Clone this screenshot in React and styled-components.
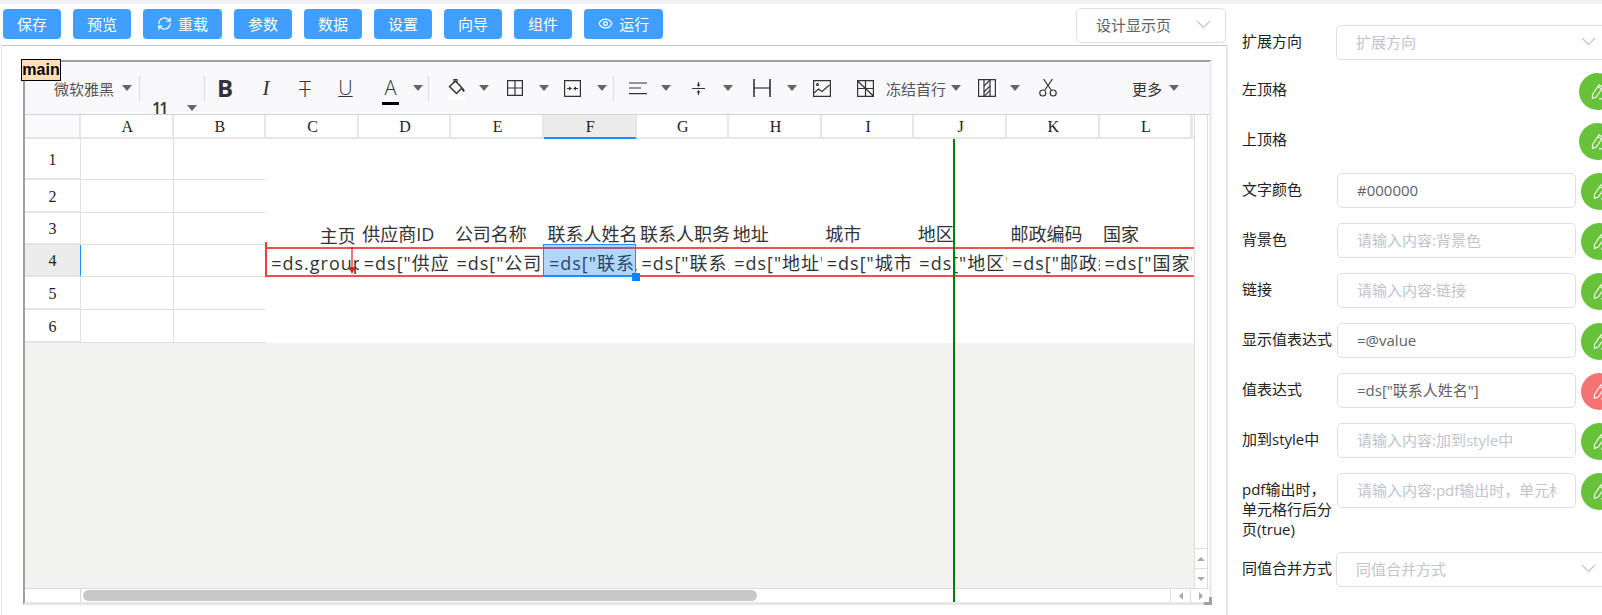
import React from "react";
import styled, { createGlobalStyle } from "styled-components";
import { RefreshCw, Eye } from "lucide-react";

const FONT = `"Open Sans", "Noto Sans CJK SC", sans-serif`;

const GlobalStyle = createGlobalStyle`
  html, body {
    margin: 0;
    padding: 0;
    overflow: hidden;
    background: #fff;
  }
  * { box-sizing: border-box; }
`;

const Page = styled.div`
  width: 1602px;
  height: 615px;
  overflow: hidden;
  display: flex;
  flex-direction: column;
  font-family: ${FONT};
  font-size: 15px;
`;

const TopStrip = styled.div`
  height: 4px;
  flex: none;
  background: #eef0f3;
`;

const Main = styled.div`
  flex: 1;
  display: flex;
  min-height: 0;
`;

const Designer = styled.div`
  width: 1228px;
  flex: none;
  display: flex;
  flex-direction: column;
  padding-left: 1px;
`;

const TopBar = styled.div`
  height: 41px;
  flex: none;
  display: flex;
  justify-content: space-between;
  padding: 0 2px 0 2px;
`;

const ButtonGroup = styled.div`
  display: flex;
  gap: 12px;
  padding-top: 5px;
`;

const Button = styled.div`
  height: 30px;
  padding: 0 14px 2px;
  display: flex;
  align-items: center;
  gap: 6px;
  color: #fff;
  background: #409eff;
  border-radius: 4px;
  white-space: nowrap;
`;

const SelectBox = styled.div`
  width: ${(p) => p.$w}px;
  height: 35px;
  flex: none;
  display: flex;
  align-items: center;
  justify-content: space-between;
  padding: 0 14px 2px 19px;
  background: #fff;
  border: 1px solid #dcdfe6;
  border-radius: 5px;
  color: ${(p) => (p.$placeholder ? "#c0c4cc" : "#606266")};
`;

const PageSelect = styled(SelectBox)`
  margin-top: 4px;
`;

const Canvas = styled.div`
  flex: 1;
  min-height: 0;
  padding: 14px 0 0 21px;
  border-top: 1px solid #c4c4c4;
  border-left: 1px solid #e4e4e4;
  border-right: 2px solid #e6e6e6;
`;

const Sheet = styled.div`
  position: relative;
  width: 1189px;
  height: 545px;
  display: flex;
  flex-direction: column;
  background: #fff;
  border-top: 2px solid #a0a0a0;
  border-left: 2px solid #a0a0a0;
  border-right: 3px solid #eeeeee;
  border-bottom: 3px solid #e6e6e6;
`;

const SheetTag = styled.div`
  position: absolute;
  left: -4px;
  top: -3px;
  z-index: 5;
  width: 40px;
  height: 22px;
  background: #ffdfba;
  border: 1px solid #000;
  color: #000;
  font: bold 16px/19px "Liberation Sans", sans-serif;
  text-align: center;
`;

const Toolbar = styled.div`
  height: 53px;
  flex: none;
  display: flex;
  align-items: center;
  background: #f9f9fb;
  border-bottom: 1px solid #d2d2d2;
  color: #333;
  overflow: hidden;
`;

const Caret = styled.i`
  flex: none;
  width: 0;
  height: 0;
  margin-left: ${(p) => p.$ml}px;
  margin-right: -1px;
  border-top: 6px solid #666;
  border-left: 5px solid transparent;
  border-right: 5px solid transparent;
`;

const ToolSep = styled.i`
  flex: none;
  width: 1px;
  height: 25px;
  margin-left: ${(p) => p.$ml}px;
  background: #dcdcdf;
`;

const ToolText = styled.span`
  flex: none;
  width: ${(p) => p.$w}px;
  margin-left: ${(p) => p.$ml}px;
  color: ${(p) => p.$color || "#555"};
  white-space: nowrap;
`;

const FontSizeBox = styled.div`
  flex: none;
  align-self: flex-end;
  width: 44px;
  height: 12px;
  display: flex;
  align-items: center;
  justify-content: space-between;
  margin-left: 12px;
  font-size: 16px;
  font-weight: 600;
  letter-spacing: -2px;
  line-height: 12px;
  color: #333;
`;

const Glyph = styled.span`
  position: relative;
  flex: none;
  width: ${(p) => p.$w}px;
  margin-left: ${(p) => p.$ml}px;
  text-align: center;
  font-family: ${(p) => (p.$serif ? `"Liberation Serif", serif` : `"Open Sans", sans-serif`)};
  font-size: ${(p) => p.$size || 20}px;
  font-weight: ${(p) => p.$weight || 300};
  font-style: ${(p) => (p.$italic ? "italic" : "normal")};
  text-decoration: ${(p) => p.$line || "none"};
  text-decoration-thickness: 1px;
  line-height: 24px;
  color: #333;
`;

const ColorGlyph = styled(Glyph)`
  &::after {
    content: "";
    position: absolute;
    left: 0;
    right: 0;
    top: 26px;
    height: 3px;
    background: #000;
  }
`;

const ToolIcon = styled.svg`
  flex: none;
  margin-left: ${(p) => p.$ml}px;
  fill: none;
  stroke: #333;
  stroke-width: 1.2;
`;

const Workspace = styled.div`
  position: relative;
  flex: 1;
  min-height: 0;
  display: flex;
`;

const Grid = styled.div`
  width: 1169px;
  flex: none;
  display: flex;
  flex-direction: column;
`;

const HeaderRow = styled.div`
  height: 24px;
  flex: none;
  display: flex;
  font: 16px/24px "Liberation Serif", serif;
  color: #222;
`;

const Corner = styled.div`
  width: 56px;
  flex: none;
  background: #fafafc;
  border-right: 2px solid #e4e4e4;
  border-bottom: 2px solid #e4e4e4;
`;

const ColHead = styled.div`
  width: 92.6px;
  flex: none;
  padding-left: 2px;
  text-align: center;
  background: ${(p) => (p.$active ? "#ececec" : "#fff")};
  border-right: 2px solid #e6e6e6;
  border-bottom: 2px solid ${(p) => (p.$active ? "#1890ff" : "#e6e6e6")};
`;

const HeadFiller = styled.div`
  flex: 1;
  border-bottom: 2px solid #e6e6e6;
  border-left: 1px solid #e6e6e6;
`;

const Row = styled.div`
  position: relative;
  height: ${(p) => p.$h}px;
  flex: none;
  display: flex;
`;

const RowHead = styled.div`
  width: 56px;
  flex: none;
  display: flex;
  align-items: center;
  justify-content: center;
  padding-top: 2px;
  font: 16px "Liberation Serif", serif;
  color: #222;
  background: ${(p) => (p.$active ? "#ececec" : "#fff")};
  border-bottom: 2px solid #e4e4e4;
  border-right: 1px solid ${(p) => (p.$active ? "#1890ff" : "#e0e0e0")};
`;

const BlankCell = styled.div`
  width: 92.6px;
  flex: none;
  border-right: 1px solid ${(p) => (p.$last ? "transparent" : "#dedede")};
  border-bottom: 1px solid #dedede;
`;

const Cell = styled.div`
  width: 92.6px;
  flex: none;
  overflow: hidden;
  display: flex;
  align-items: flex-end;
  justify-content: ${(p) => (p.$right ? "flex-end" : "flex-start")};
  padding: ${(p) => (p.$right ? "0 3px 0 0" : "0 0 2px 3.5px")};
  font-size: 18px;
  line-height: 18px;
  color: #333;
  white-space: nowrap;
`;

const FormulaCell = styled(Cell)`
  align-items: center;
  padding: 3px 0 0 5px;
  letter-spacing: 1px;
`;

const RedBand = styled.div`
  position: absolute;
  left: 240.2px;
  right: 0;
  top: 2px;
  height: 30px;
  border-top: 2px solid #f25050;
  border-bottom: 2px solid #f44c4c;
  pointer-events: none;
`;

const RedTick = styled.div`
  position: absolute;
  left: 240px;
  top: -3px;
  width: 2px;
  height: 35px;
  background: #f23c3c;
`;

const Arrow = styled.svg`
  position: absolute;
  left: 323px;
  top: 2px;
`;

const Selection = styled.div`
  position: absolute;
  left: 518.1px;
  top: -1px;
  width: 92.6px;
  height: 33px;
  background: rgba(1, 120, 235, 0.3);
  border: 1px solid #1890ff;
`;

const FillHandle = styled.div`
  position: absolute;
  left: 606.5px;
  top: 28px;
  width: 8px;
  height: 8px;
  background: #0a84ff;
`;

const Backdrop = styled.div`
  flex: 1;
  background: #f2f2f0;
`;

const FreezeLine = styled.div`
  position: absolute;
  left: 928px;
  top: 24px;
  bottom: -14px;
  width: 2px;
  z-index: 3;
  background: #008000;
`;

const VScroll = styled.div`
  width: 14px;
  flex: none;
  display: flex;
  flex-direction: column;
  justify-content: flex-end;
  border-left: 1px solid #dcdcdc;
  border-right: 1px solid #dcdcdc;
`;

const ScrollButton = styled.div`
  height: 20px;
  display: flex;
  align-items: center;
  justify-content: center;
  border-top: 1px solid #dcdcdc;
  background: #fff;
`;

const ScrollArrow = styled.i`
  width: 0;
  height: 0;
  border-style: solid;
  border-color: transparent;
  ${(p) => p.$dir === "up" && "border-width: 0 4px 4px; border-bottom-color: #aaa;"}
  ${(p) => p.$dir === "down" && "border-width: 4px 4px 0; border-top-color: #aaa;"}
  ${(p) => p.$dir === "left" && "border-width: 4px 4px 4px 0; border-right-color: #aaa;"}
  ${(p) => p.$dir === "right" && "border-width: 4px 0 4px 4px; border-left-color: #aaa;"}
`;

const BottomBar = styled.div`
  height: 14px;
  flex: none;
  display: flex;
  border-top: 1px solid #dcdcdc;
`;

const BottomBlank = styled.div`
  width: 55px;
  flex: none;
  background: #fff;
`;

const HTrack = styled.div`
  width: 1090px;
  flex: none;
  padding: 1px 0 0 2px;
  border-left: 1px solid #d8d8d8;
`;

const HThumb = styled.div`
  width: 674px;
  height: 11px;
  border-radius: 6px;
  background: #c8c8c8;
`;

const HButton = styled.div`
  width: 20px;
  flex: none;
  display: flex;
  align-items: center;
  justify-content: center;
  border-left: 1px solid #e0e0e0;
`;

const ResizeGrip = styled.div`
  position: absolute;
  right: -3px;
  bottom: -3px;
  width: 8px;
  height: 8px;
  border-right: 3px solid #a0a0a0;
  border-bottom: 3px solid #a0a0a0;
`;

const SidePanel = styled.div`
  flex: 1;
  min-width: 0;
  padding: 21px 0 0 14px;
  overflow: hidden;
`;

const FormRow = styled.div`
  display: flex;
  align-items: flex-start;
  margin-bottom: 13px;
  width: 420px;
`;

const FormLabel = styled.div`
  width: 94px;
  flex: none;
  padding-top: 6px;
  line-height: 20px;
  color: #222;
`;

const FieldSlot = styled.div`
  width: 245px;
  flex: none;
  padding-left: 1px;
  display: flex;
`;

const EmptySlot = styled.div`
  width: 243px;
  flex: none;
`;

const InputBox = styled.div`
  width: 238.5px;
  height: 35px;
  padding: 0 19px;
  border: 1px solid #dcdfe6;
  border-radius: 5px;
  overflow: hidden;
  white-space: nowrap;
  line-height: 33px;
  background: #fff;
  color: ${(p) => (p.$placeholder ? "#c0c4cc" : "#606266")};
`;

const Clip = styled.div`
  overflow: hidden;
`;

const CircleButton = styled.div`
  width: 37px;
  height: 37px;
  flex: none;
  display: flex;
  align-items: center;
  padding-left: 12px;
  border-radius: 50%;
  background: ${(p) => (p.$danger ? "#f67373" : "#67c23a")};
`;

const Chevron = ({ w = 15 }) => (
  <svg width={w} height="9" viewBox="0 0 15 9" fill="none" stroke="#c0c4cc" strokeWidth="1.1">
    <path d="M1 1l6.5 6.5L14 1" />
  </svg>
);

const Pencil = () => (
  <svg width="15" height="17" viewBox="0 0 15 17" fill="none" stroke="#fff" strokeWidth="1.2" opacity="0.9">
    <path d="M1.5 11.5L8 1.8l3.8 2.5-6.5 9.7-3.9 1.4z" />
    <path d="M6.8 3.6l3.8 2.5" />
    <path d="M8 15.8h7" />
  </svg>
);

const columns = ["A", "B", "C", "D", "E", "F", "G", "H", "I", "J", "K", "L"];
const titles = ["主页", "供应商ID", "公司名称", "联系人姓名", "联系人职务", "地址", "城市", "地区", "邮政编码", "国家"];
const formulas = [
  "=ds.group(",
  '=ds["供应商ID"]',
  '=ds["公司名称"]',
  '=ds["联系人姓名"]',
  '=ds["联系人职务"]',
  '=ds["地址"]',
  '=ds["城市"]',
  '=ds["地区"]',
  '=ds["邮政编码"]',
  '=ds["国家"]',
];

const formRows = [
  { label: "文字颜色", value: "#000000" },
  { label: "背景色", hint: "请输入内容:背景色" },
  { label: "链接", hint: "请输入内容:链接" },
  { label: "显示值表达式", value: "=@value" },
  { label: "值表达式", value: '=ds["联系人姓名"]', danger: true },
  { label: "加到style中", hint: "请输入内容:加到style中" },
  { label: "pdf输出时，单元格行后分页(true)", hint: "请输入内容:pdf输出时，单元格行后分页(true)" },
];

function SheetToolbar() {
  return (
    <Toolbar>
      <ToolText $w={60} $ml={29}>微软雅黑</ToolText>
      <Caret $ml={8} />
      <ToolSep $ml={8} />
      <FontSizeBox>
        11
        <Caret $ml={0} />
      </FontSizeBox>
      <ToolSep $ml={8} />
      <Glyph $w={14} $ml={12} $size={24} $weight={700}>B</Glyph>
      <Glyph $w={10} $ml={30} $size={21} $weight={400} $serif $italic>I</Glyph>
      <Glyph $w={16} $ml={26} $size={22} $line="line-through">T</Glyph>
      <Glyph $w={15} $ml={25} $line="underline">U</Glyph>
      <ColorGlyph $w={17} $ml={29}>A</ColorGlyph>
      <Caret $ml={14} />
      <ToolSep $ml={6} />
      <ToolIcon $ml={19} width="17" height="24" viewBox="0 0 17 24">
        <path d="M1.5 10.5L7.5 5l6.5 7-5.5 5.5z" strokeWidth="1.5" />
        <path d="M6 6.5V3.5h3v3" />
        <path d="M14.5 12.5l1.5 3" strokeWidth="2" />
        <rect x="0" y="20.5" width="17" height="3" fill="#fff" stroke="none" />
      </ToolIcon>
      <Caret $ml={14} />
      <ToolIcon $ml={19} width="16" height="16" viewBox="0 0 16 16">
        <path d="M.6.6h14.8v14.8H.6zM8 .6v14.8M.6 8h14.8" />
      </ToolIcon>
      <Caret $ml={16} />
      <ToolIcon $ml={16} width="17" height="17" viewBox="0 0 17 17">
        <path d="M.6.6h15.8v15.8H.6z" />
        <path d="M3 8.5h2M12 8.5h2" />
        <path d="M8 8.5L5 6.5v4zM9 8.5l3-2v4z" fill="#333" stroke="none" />
      </ToolIcon>
      <Caret $ml={16} />
      <ToolSep $ml={7} />
      <ToolIcon $ml={15} width="18" height="13" viewBox="0 0 18 13">
        <path d="M0 1h18M0 6h12M0 11.6h18" />
      </ToolIcon>
      <Caret $ml={14} />
      <ToolIcon $ml={22} width="13" height="15" viewBox="0 0 13 15">
        <path d="M0 7.5h13M6.5 1v4M6.5 10v4" />
        <path d="M6.5 6L4.5 3.5h4zM6.5 9l-2 2.5h4z" fill="#333" stroke="none" />
      </ToolIcon>
      <Caret $ml={18} />
      <ToolIcon $ml={21} width="18" height="18" viewBox="0 0 18 18">
        <path d="M1 0v18M17 0v18" strokeWidth="1.6" />
        <path d="M1 9h16" />
      </ToolIcon>
      <Caret $ml={16} />
      <ToolIcon $ml={17} width="18" height="17" viewBox="0 0 18 17">
        <path d="M.6.6h16.8v15.8H.6z" />
        <path d="M1 13l4.5-4 3.5 2.5L16.5 5" />
        <circle cx="4.5" cy="4.5" r="1" />
      </ToolIcon>
      <ToolIcon $ml={26} width="17" height="17" viewBox="0 0 17 17">
        <path d="M.6.6h15.8v15.8H.6zM8.5.6v15.8M.6 8.5h15.8M.6 1l15.8 15" />
      </ToolIcon>
      <ToolText $w={60} $ml={12}>冻结首行</ToolText>
      <Caret $ml={5} />
      <ToolIcon $ml={18} width="18" height="18" viewBox="0 0 18 18">
        <path d="M.6.6h16.8v16.8H.6zM6 .6v16.8M12 .6v16.8" />
        <path d="M6 7l6-6M6 13l6-6M6 17.4l6-6" />
      </ToolIcon>
      <Caret $ml={14} />
      <ToolIcon $ml={20} width="18" height="18" viewBox="0 0 18 18">
        <circle cx="3.8" cy="14" r="3" />
        <circle cx="14.2" cy="14" r="3" />
        <path d="M5.5 11.5L13.5 0M12.5 11.5L4.5 0" />
      </ToolIcon>
      <ToolText $w={30} $ml={75} $color="#333">更多</ToolText>
      <Caret $ml={7} />
    </Toolbar>
  );
}

function SheetGrid() {
  const plainRows = [
    { n: 1, h: 41 },
    { n: 2, h: 33 },
  ];
  const lowerRows = [
    { n: 5, h: 33 },
    { n: 6, h: 33 },
  ];
  return (
    <Grid>
      <HeaderRow>
        <Corner />
        {columns.map((c) => (
          <ColHead key={c} $active={c === "F"}>{c}</ColHead>
        ))}
        <HeadFiller />
      </HeaderRow>
      {plainRows.map((r) => (
        <Row key={r.n} $h={r.h}>
          <RowHead>{r.n}</RowHead>
          <BlankCell />
          <BlankCell $last />
        </Row>
      ))}
      <Row $h={32}>
        <RowHead>3</RowHead>
        <BlankCell />
        <BlankCell $last />
        {titles.map((t, i) => (
          <Cell key={t} $right={i === 0}>{t}</Cell>
        ))}
      </Row>
      <Row $h={32}>
        <RowHead $active>4</RowHead>
        <BlankCell />
        <BlankCell $last />
        {formulas.map((f) => (
          <FormulaCell key={f}>{f}</FormulaCell>
        ))}
        <RedBand />
        <RedTick />
        <Arrow width="8" height="28" viewBox="0 0 8 28">
          <path d="M4 0v24" stroke="#e02020" strokeWidth="1.2" />
          <path d="M.5 20h7L4 27z" fill="#e02020" />
        </Arrow>
        <Selection />
        <FillHandle />
      </Row>
      {lowerRows.map((r) => (
        <Row key={r.n} $h={r.h}>
          <RowHead>{r.n}</RowHead>
          <BlankCell />
          <BlankCell $last />
        </Row>
      ))}
      <Backdrop />
    </Grid>
  );
}

function PropertyPanel() {
  return (
    <SidePanel>
      <FormRow>
        <FormLabel>扩展方向</FormLabel>
        <SelectBox $w={275} $placeholder>
          扩展方向
          <Chevron />
        </SelectBox>
      </FormRow>
      {["左顶格", "上顶格"].map((label) => (
        <FormRow key={label}>
          <FormLabel>{label}</FormLabel>
          <EmptySlot />
          <CircleButton><Pencil /></CircleButton>
        </FormRow>
      ))}
      {formRows.map((r) => (
        <FormRow key={r.label}>
          <FormLabel>{r.label}</FormLabel>
          <FieldSlot>
            <InputBox $placeholder={!r.value}>
              <Clip>{r.value || r.hint}</Clip>
            </InputBox>
          </FieldSlot>
          <CircleButton $danger={r.danger}><Pencil /></CircleButton>
        </FormRow>
      ))}
      <FormRow>
        <FormLabel>同值合并方式</FormLabel>
        <SelectBox $w={275} $placeholder>
          同值合并方式
          <Chevron />
        </SelectBox>
      </FormRow>
    </SidePanel>
  );
}

export default function App() {
  return (
    <Page>
      <GlobalStyle />
      <TopStrip />
      <Main>
        <Designer>
          <TopBar>
            <ButtonGroup>
              <Button>保存</Button>
              <Button>预览</Button>
              <Button><RefreshCw size={15} strokeWidth={2} />重载</Button>
              <Button>参数</Button>
              <Button>数据</Button>
              <Button>设置</Button>
              <Button>向导</Button>
              <Button>组件</Button>
              <Button><Eye size={15} strokeWidth={2} />运行</Button>
            </ButtonGroup>
            <PageSelect $w={150}>
              设计显示页
              <Chevron />
            </PageSelect>
          </TopBar>
          <Canvas>
            <Sheet>
              <SheetTag>main</SheetTag>
              <SheetToolbar />
              <Workspace>
                <SheetGrid />
                <VScroll>
                  <ScrollButton><ScrollArrow $dir="up" /></ScrollButton>
                  <ScrollButton><ScrollArrow $dir="down" /></ScrollButton>
                </VScroll>
                <FreezeLine />
              </Workspace>
              <BottomBar>
                <BottomBlank />
                <HTrack><HThumb /></HTrack>
                <HButton><ScrollArrow $dir="left" /></HButton>
                <HButton><ScrollArrow $dir="right" /></HButton>
              </BottomBar>
              <ResizeGrip />
            </Sheet>
          </Canvas>
        </Designer>
        <PropertyPanel />
      </Main>
    </Page>
  );
}
